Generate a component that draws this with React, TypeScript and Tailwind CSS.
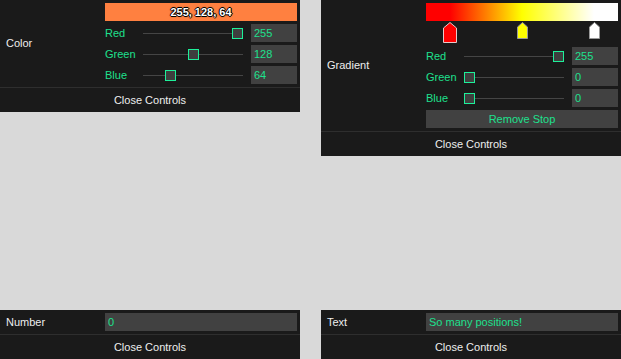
const GREEN = "text-[#1ee08e]"

function Slider({ label, value }: { label: string; value: number }) {
  const left = (value / 255) * (100 - 11)
  return (
    <div className="flex items-center h-[18px]">
      <span className={`w-[38px] ${GREEN}`}>{label}</span>
      <div className="relative w-[100px] h-[18px] flex items-center">
        <div className="w-full h-px bg-[#454545]" />
        <div
          className="absolute top-[4px] w-[11px] h-[11px] border border-[#1ef09a] bg-[#3e3e3e]"
          style={{ left: `${left}px` }}
        />
      </div>
      <div className={`ml-[8px] w-[46px] h-[18px] bg-[#414141] pl-[3px] flex items-center ${GREEN}`}>{value}</div>
    </div>
  )
}

function Panel({ label, children }: { label: string; children: React.ReactNode }) {
  return (
    <div className="w-[300px] bg-[#1a1a1a] text-[11px] text-[#eeeeee]">
      <div className="flex">
        <div className="w-[105px] pl-[6px] flex items-center">{label}</div>
        <div className="w-[192px] py-[3px] flex flex-col gap-[3px]">{children}</div>
      </div>
      <div className="h-px bg-[#2e2e2e]" />
      <div className="h-6 flex items-center justify-center">Close Controls</div>
    </div>
  )
}

function Stop({ color, selected, left }: { color: string; selected?: boolean; left: number }) {
  const w = selected ? 14 : 11
  const h = selected ? 21 : 17
  return (
    <svg className="absolute top-[1px]" style={{ left }} width={w} height={h} viewBox={`0 0 ${w} ${h}`}>
      <polygon
        points={`${w / 2},0.5 ${w - 0.5},${selected ? 6 : 5} ${w - 0.5},${h - 0.5} 0.5,${h - 0.5} 0.5,${selected ? 6 : 5}`}
        fill={color}
        stroke={selected ? "#e8c8c8" : "#9a9a9a"}
        strokeWidth="1"
      />
    </svg>
  )
}

export default function App() {
  return (
    <div
      className="h-[359px] w-[621px] bg-[#d9d9d9] flex flex-col justify-between"
      style={{ fontFamily: '"Liberation Sans", Arial, sans-serif' }}
    >
      <div className="flex justify-between items-start">
        <Panel label="Color">
          <div className="h-[18px] bg-[#ff8040] flex items-center justify-center font-bold text-white [text-shadow:0_1px_0_#000,0_-1px_0_#000,1px_0_0_#000,-1px_0_0_#000,0_0_2px_#000]">
            255, 128, 64
          </div>
          <Slider label="Red" value={255} />
          <Slider label="Green" value={128} />
          <Slider label="Blue" value={64} />
        </Panel>

        <Panel label="Gradient">
          <div>
            <div className="h-[18px] bg-[linear-gradient(to_right,#ff0000_12.5%,#ffff00_50%,#ffffff_87.5%)]" />
            <div className="relative h-[23px]">
              <Stop color="#ff0000" selected left={17} />
              <Stop color="#ffff00" left={91} />
              <Stop color="#ffffff" left={163} />
            </div>
          </div>
          <Slider label="Red" value={255} />
          <Slider label="Green" value={0} />
          <Slider label="Blue" value={0} />
          <div className={`h-[18px] bg-[#414141] flex items-center justify-center ${GREEN}`}>Remove Stop</div>
        </Panel>
      </div>

      <div className="flex justify-between items-end">
        <Panel label="Number">
          <div className={`h-[18px] bg-[#414141] pl-[3px] flex items-center ${GREEN}`}>0</div>
        </Panel>
        <Panel label="Text">
          <div className={`h-[18px] bg-[#414141] pl-[3px] flex items-center ${GREEN}`}>So many positions!</div>
        </Panel>
      </div>
    </div>
  )
}
